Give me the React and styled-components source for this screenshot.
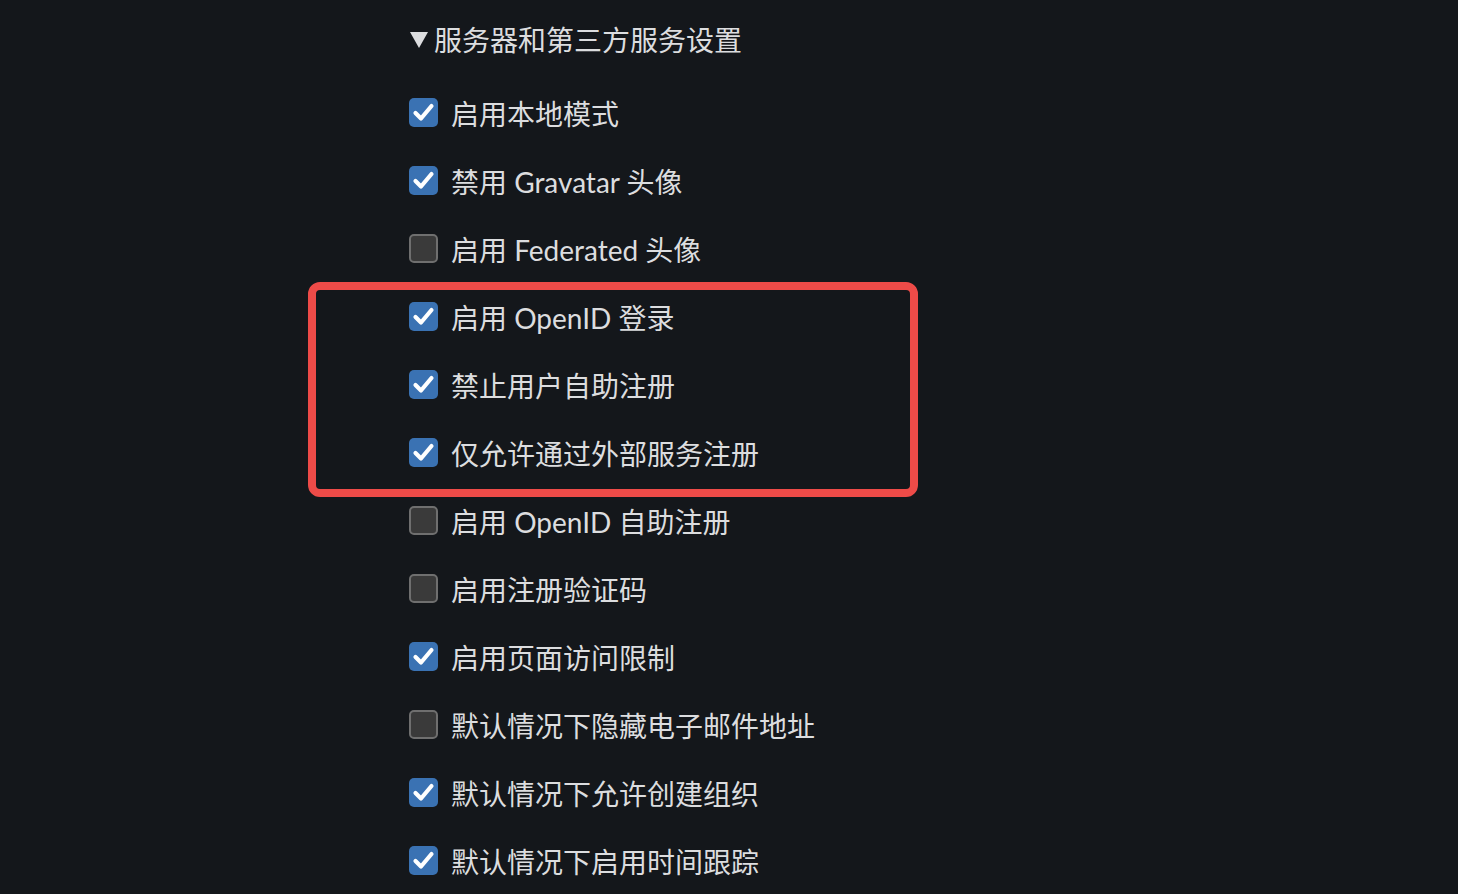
import React from "react";
import styled, { createGlobalStyle } from "styled-components";

const GlobalStyle = createGlobalStyle`
  html, body {
    margin: 0;
    padding: 0;
    background: #14171b;
  }
  body {
    font-family: "Lato", "Noto Sans CJK SC", sans-serif;
    color: #dcdddf;
  }
`;

const Page = styled.div`
  width: 1458px;
  height: 894px;
  overflow: hidden;
  padding-left: 409px;
  box-sizing: border-box;
  display: flex;
  flex-direction: column;
`;

const Summary = styled.div`
  height: 79px;
  display: flex;
  align-items: center;
  gap: 6px;
  font-size: 28px;
`;

const Triangle = styled.span`
  width: 0;
  height: 0;
  border-left: 9px solid transparent;
  border-right: 9px solid transparent;
  border-top: 16px solid #dcdddf;
  margin-left: 1px;
  margin-top: 2px;
`;

const List = styled.div`
  display: flex;
  flex-direction: column;
`;

const Group = styled.div`
  position: relative;
  display: flex;
  flex-direction: column;
`;

const Frame = styled.div`
  position: absolute;
  top: 0;
  left: -101px;
  width: 610px;
  height: 215px;
  box-sizing: border-box;
  border: 8px solid #ee4b48;
  border-radius: 12px;
  pointer-events: none;
`;

const Row = styled.label`
  height: 68px;
  display: flex;
  align-items: center;
  gap: 13px;
  font-size: 28px;
  line-height: 1;
  white-space: nowrap;
`;

const Label = styled.span`
  padding-top: 3px;
`;

const Box = styled.span`
  width: 29px;
  height: 29px;
  box-sizing: border-box;
  border-radius: 5px;
  flex: none;
  display: flex;
  align-items: center;
  justify-content: center;
  background: ${({ checked }) => (checked ? "#3a72b3" : "#3a3a3a")};
  border: ${({ checked }) => (checked ? "none" : "2px solid #6f6f6f")};
`;

const Check = () => (
  <svg width="23" height="23" viewBox="0 0 23 23">
    <polyline
      points="3.5,12 9,17.5 19.5,5"
      fill="none"
      stroke="#fff"
      strokeWidth="4.2"
      strokeLinecap="round"
      strokeLinejoin="round"
    />
  </svg>
);

const Option = ({ checked, children }) => (
  <Row>
    <Box checked={checked}>{checked && <Check />}</Box>
    <Label>{children}</Label>
  </Row>
);

const before = [
  ["启用本地模式", true],
  ["禁用 Gravatar 头像", true],
  ["启用 Federated 头像", false],
];

const marked = [
  ["启用 OpenID 登录", true],
  ["禁止用户自助注册", true],
  ["仅允许通过外部服务注册", true],
];

const after = [
  ["启用 OpenID 自助注册", false],
  ["启用注册验证码", false],
  ["启用页面访问限制", true],
  ["默认情况下隐藏电子邮件地址", false],
  ["默认情况下允许创建组织", true],
  ["默认情况下启用时间跟踪", true],
];

export default function App() {
  return (
    <>
      <GlobalStyle />
      <Page>
        <Summary>
          <Triangle />
          <span>服务器和第三方服务设置</span>
        </Summary>
        <List>
          {before.map(([t, c]) => (
            <Option key={t} checked={c}>{t}</Option>
          ))}
          <Group>
            <Frame />
            {marked.map(([t, c]) => (
              <Option key={t} checked={c}>{t}</Option>
            ))}
          </Group>
          {after.map(([t, c]) => (
            <Option key={t} checked={c}>{t}</Option>
          ))}
        </List>
      </Page>
    </>
  );
}
